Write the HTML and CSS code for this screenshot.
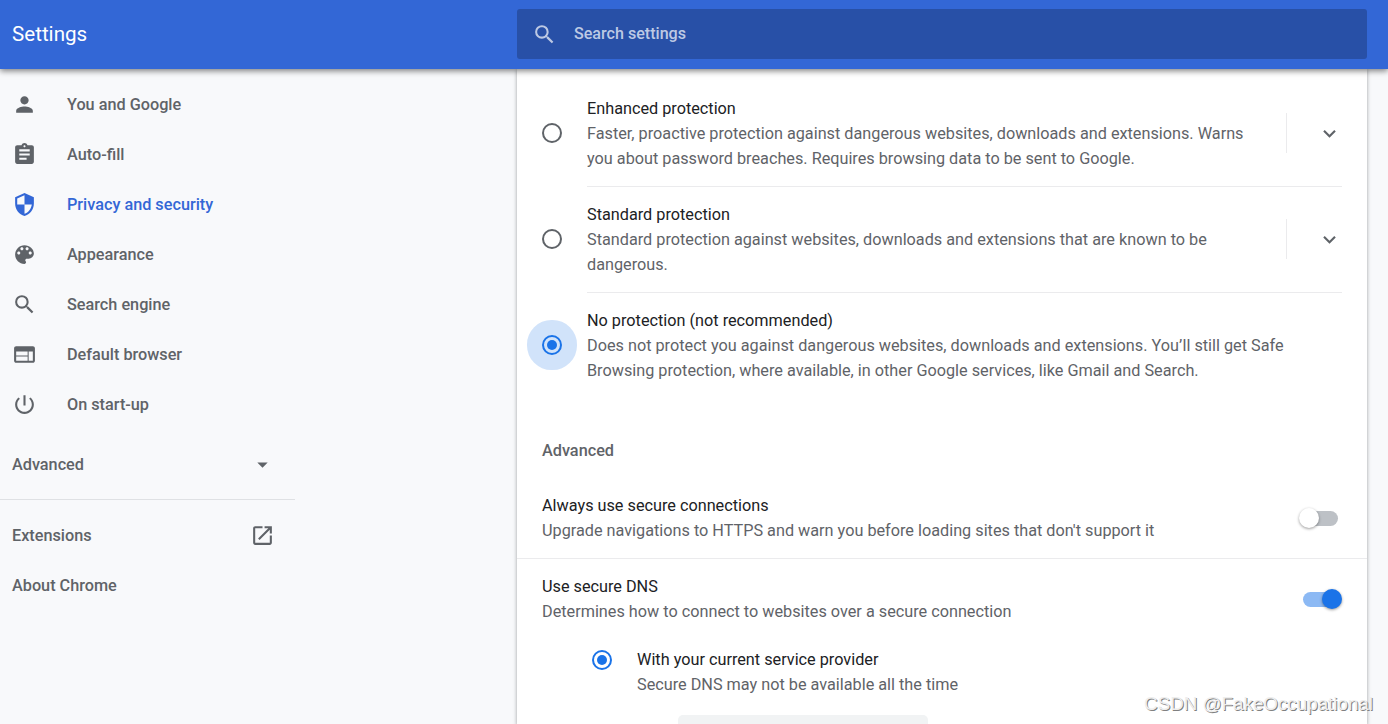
FILE: index.html
```html
<!DOCTYPE html>
<html lang="en">
<head>
    <meta charset="UTF-8">
    <meta name="viewport" content="width=device-width, initial-scale=1.0">
    <title>Settings</title>
    <link rel="stylesheet" href="styles.css">
</head>
<body>

<header class="toolbar">
    <h1>Settings</h1>
    <div class="search">
        <svg class="icon" viewBox="0 0 24 24"><path d="M15.5 14h-.79l-.28-.27A6.471 6.471 0 0 0 16 9.5 6.5 6.5 0 1 0 9.5 16c1.61 0 3.09-.59 4.23-1.57l.27.28v.79l5 4.99L20.49 19l-4.99-5zm-6 0C7.01 14 5 11.99 5 9.5S7.01 5 9.5 5 14 7.01 14 9.5 11.99 14 9.5 14z"/></svg>
        <span>Search settings</span>
    </div>
</header>

<div class="container">
    <nav class="menu">
        <a class="menu-item">
            <svg class="icon" viewBox="0 0 24 24"><path d="M12 12c2.21 0 4-1.79 4-4s-1.79-4-4-4-4 1.79-4 4 1.79 4 4 4zm0 2c-2.67 0-8 1.34-8 4v2h16v-2c0-2.66-5.33-4-8-4z"/></svg>
            You and Google
        </a>
        <a class="menu-item">
            <svg class="icon" viewBox="0 0 24 24"><path d="M19 3h-4.18C14.4 1.84 13.3 1 12 1c-1.3 0-2.4.84-2.82 2H5c-1.1 0-2 .9-2 2v14c0 1.1.9 2 2 2h14c1.1 0 2-.9 2-2V5c0-1.1-.9-2-2-2zm-7 0c.55 0 1 .45 1 1s-.45 1-1 1-1-.45-1-1 .45-1 1-1zm2 14H7v-2h7v2zm3-4H7v-2h10v2zm0-4H7V7h10v2z"/></svg>
            Auto-fill
        </a>
        <a class="menu-item selected">
            <svg class="icon" viewBox="0 0 24 24"><path d="M12 1L3 5v6c0 5.55 3.84 10.74 9 12 5.16-1.26 9-6.45 9-12V5l-9-4zm0 10.99h7c-.53 4.12-3.28 7.79-7 8.94V12H5V6.3l7-3.11v8.8z"/></svg>
            Privacy and security
        </a>
        <a class="menu-item">
            <svg class="icon" viewBox="0 0 24 24"><path d="M12 3c-4.97 0-9 4.03-9 9s4.03 9 9 9c.83 0 1.5-.67 1.5-1.5 0-.39-.15-.74-.39-1.01-.23-.26-.38-.61-.38-.99 0-.83.67-1.5 1.5-1.5H16c2.76 0 5-2.24 5-5 0-4.42-4.03-8-9-8zm-5.5 9c-.83 0-1.5-.67-1.5-1.5S5.67 9 6.5 9 8 9.67 8 10.5 7.33 12 6.5 12zm3-4C8.67 8 8 7.33 8 6.5S8.67 5 9.5 5s1.5.67 1.5 1.5S10.33 8 9.5 8zm5 0c-.83 0-1.5-.67-1.5-1.5S13.67 5 14.5 5s1.5.67 1.5 1.5S15.33 8 14.5 8zm3 4c-.83 0-1.5-.67-1.5-1.5S16.67 9 17.5 9s1.5.67 1.5 1.5-.67 1.5-1.5 1.5z"/></svg>
            Appearance
        </a>
        <a class="menu-item">
            <svg class="icon" viewBox="0 0 24 24"><path d="M15.5 14h-.79l-.28-.27A6.471 6.471 0 0 0 16 9.5 6.5 6.5 0 1 0 9.5 16c1.61 0 3.09-.59 4.23-1.57l.27.28v.79l5 4.99L20.49 19l-4.99-5zm-6 0C7.01 14 5 11.99 5 9.5S7.01 5 9.5 5 14 7.01 14 9.5 11.99 14 9.5 14z"/></svg>
            Search engine
        </a>
        <a class="menu-item">
            <svg class="icon" viewBox="0 0 24 24"><path d="M20 4H4c-1.1 0-1.99.9-1.99 2L2 18c0 1.1.9 2 2 2h16c1.1 0 2-.9 2-2V6c0-1.1-.9-2-2-2zm-5 14H4v-4h11v4zm0-5H4V9h11v4zm5 5h-4V9h4v9z"/></svg>
            Default browser
        </a>
        <a class="menu-item">
            <svg class="icon" viewBox="0 0 24 24"><path d="M13 3h-2v10h2V3zm4.83 2.17l-1.42 1.42C17.99 7.86 19 9.81 19 12c0 3.87-3.13 7-7 7s-7-3.13-7-7c0-2.19 1.01-4.14 2.58-5.42L6.17 5.17C4.23 6.82 3 9.26 3 12c0 4.97 4.03 9 9 9s9-4.03 9-9c0-2.74-1.23-5.18-3.17-6.83z"/></svg>
            On start-up
        </a>
        <div class="menu-item wide advanced">
            Advanced
            <svg class="icon" viewBox="0 0 24 24"><path d="M7 10l5 5 5-5z"/></svg>
        </div>
        <hr>
        <a class="menu-item wide">
            Extensions
            <svg class="icon" viewBox="0 0 24 24"><path d="M19 19H5V5h7V3H5c-1.11 0-2 .9-2 2v14c0 1.1.89 2 2 2h14c1.1 0 2-.9 2-2v-7h-2v7zM14 3v2h3.59l-9.83 9.83 1.41 1.41L19 6.41V10h2V3h-7z"/></svg>
        </a>
        <a class="menu-item wide">About Chrome</a>
    </nav>

    <main class="card">
        <div class="option">
            <span class="radio"></span>
            <div class="option-body">
                <div class="text">
                    <div class="label">Enhanced protection</div>
                    <div class="secondary">Faster, proactive protection against dangerous websites, downloads and extensions. Warns<br>you about password breaches. Requires browsing data to be sent to Google.</div>
                </div>
                <div class="expand">
                    <svg class="icon" viewBox="0 0 24 24"><path d="M16.59 8.59L12 13.17 7.41 8.59 6 10l6 6 6-6z"/></svg>
                </div>
            </div>
        </div>
        <div class="option">
            <span class="radio"></span>
            <div class="option-body">
                <div class="text">
                    <div class="label">Standard protection</div>
                    <div class="secondary">Standard protection against websites, downloads and extensions that are known to be<br>dangerous.</div>
                </div>
                <div class="expand">
                    <svg class="icon" viewBox="0 0 24 24"><path d="M16.59 8.59L12 13.17 7.41 8.59 6 10l6 6 6-6z"/></svg>
                </div>
            </div>
        </div>
        <div class="option">
            <span class="radio checked focused"></span>
            <div class="option-body">
                <div class="text">
                    <div class="label">No protection (not recommended)</div>
                    <div class="secondary">Does not protect you against dangerous websites, downloads and extensions. You’ll still get Safe<br>Browsing protection, where available, in other Google services, like Gmail and Search.</div>
                </div>
            </div>
        </div>

        <h2>Advanced</h2>

        <div class="row">
            <div class="text">
                <div class="label">Always use secure connections</div>
                <div class="secondary">Upgrade navigations to HTTPS and warn you before loading sites that don't support it</div>
            </div>
            <span class="toggle"></span>
        </div>
        <div class="row">
            <div class="text">
                <div class="label">Use secure DNS</div>
                <div class="secondary">Determines how to connect to websites over a secure connection</div>
            </div>
            <span class="toggle on"></span>
        </div>
        <div class="dns-option">
            <span class="radio checked"></span>
            <div class="text">
                <div class="label">With your current service provider</div>
                <div class="secondary">Secure DNS may not be available all the time</div>
            </div>
        </div>
        <div class="dns-select"></div>
    </main>
</div>

<div class="watermark">CSDN @FakeOccupational</div>

</body>
</html>
```
FILE: styles.css
```css
* {
    box-sizing: border-box;
}

body {
    margin: 0;
    height: 724px;
    overflow: hidden;
    display: flex;
    flex-direction: column;
    font-family: Roboto, sans-serif;
    font-size: 16.24px;
    line-height: 25px;
    color: #5f6368;
    background-color: #f8f9fb;
}

.toolbar {
    position: relative;
    z-index: 1;
    flex: none;
    display: flex;
    align-items: center;
    height: 69px;
    padding: 0 21px 1px 12px;
    background-color: #3367d6;
    box-shadow: 0 2px 6px rgba(0, 0, 0, 0.5);
}

h1 {
    flex: 1;
    margin: 0;
    font-size: 20.6px;
    font-weight: 400;
    color: #fff;
}

.search {
    display: flex;
    align-items: center;
    gap: 17px;
    width: 850px;
    height: 50px;
    padding-left: 15px;
    border-radius: 3px;
    background-color: #2850a7;
    color: #bdc9e4;
    font-weight: 500;
    font-size: 16.1px;
}

.search span {
    margin-bottom: 1px;
}

.icon {
    display: block;
    flex: none;
    width: 25px;
    height: 25px;
    fill: currentColor;
}

.container {
    flex: 1;
    min-height: 0;
    display: flex;
    justify-content: space-between;
    padding-right: 21px;
}

.menu {
    width: 295px;
    padding-top: 11px;
    font-weight: 500;
}

.menu-item {
    display: flex;
    align-items: center;
    gap: 30px;
    height: 50px;
    padding: 0 0 1px 12px;
}

.menu-item.selected {
    color: #3367d6;
}

.menu-item.wide {
    justify-content: space-between;
    padding-right: 20px;
}

.menu-item.advanced {
    margin-top: 10px;
}

.menu hr {
    height: 1px;
    margin: 9px 0 11px;
    border: none;
    background-color: #dfe1e4;
}

.card {
    width: 850px;
    padding-top: 11px;
    background-color: #fff;
    box-shadow: 0 1px 3px rgba(60, 64, 67, 0.3), 0 1px 4px 1px rgba(60, 64, 67, 0.15);
}

.option {
    display: flex;
    align-items: center;
    padding: 0 25px;
}

.option-body {
    flex: 1;
    display: flex;
    align-items: center;
    justify-content: space-between;
    margin-left: 25px;
    padding: 15px 0;
    border-top: 1px solid #ebebed;
}

.option:first-child .option-body {
    border-top-color: transparent;
}

.text {
    white-space: nowrap;
}

.label {
    color: #202124;
}

.expand {
    display: flex;
    align-items: center;
    height: 40px;
    margin-bottom: 1px;
    padding-left: 30px;
    border-left: 1px solid #ebebed;
}

.radio {
    flex: none;
    display: grid;
    place-items: center;
    width: 20px;
    height: 20px;
    border: 2px solid #5f6368;
    border-radius: 50%;
}

.radio.checked {
    border-color: #1a73e8;
}

.radio.checked::before {
    content: "";
    width: 10px;
    height: 10px;
    border-radius: 50%;
    background-color: #1a73e8;
}

.radio.focused {
    background-color: #d1e3fa;
    box-shadow: 0 0 0 15px #d1e3fa;
}

h2 {
    margin: 40px 25px 15px;
    font-size: 16.25px;
    font-weight: 500;
    line-height: 25px;
}

.row {
    display: flex;
    align-items: center;
    justify-content: space-between;
    padding: 15px 25px;
}

.row + .row {
    border-top: 1px solid #ebebed;
}

.toggle {
    display: flex;
    align-items: center;
    width: 35px;
    height: 15px;
    margin-right: 4px;
    border-radius: 8px;
    background-color: #bdc1c6;
}

.toggle::before {
    content: "";
    flex: none;
    width: 20px;
    height: 20px;
    margin: 0 0 1px -4px;
    border-radius: 50%;
    background-color: #fff;
    box-shadow: 0 1px 3px rgba(0, 0, 0, 0.4);
}

.toggle.on {
    background-color: #8cb9f4;
}

.toggle.on::before {
    margin-left: 18.5px;
    background-color: #1a73e8;
}

.dns-option {
    display: flex;
    gap: 25px;
    padding: 8px 25px 18px 75px;
}

.dns-option .radio {
    margin-top: 3px;
}

.dns-select {
    width: 250px;
    height: 40px;
    margin-left: 161px;
    border-radius: 5px;
    background-color: #f1f3f4;
}

.watermark {
    position: absolute;
    z-index: 2;
    right: 15px;
    bottom: 8px;
    font-family: "Liberation Sans", Arial, sans-serif;
    font-size: 18.8px;
    color: #eee;
    text-shadow: 1px 1px 0 #808080;
}
```
